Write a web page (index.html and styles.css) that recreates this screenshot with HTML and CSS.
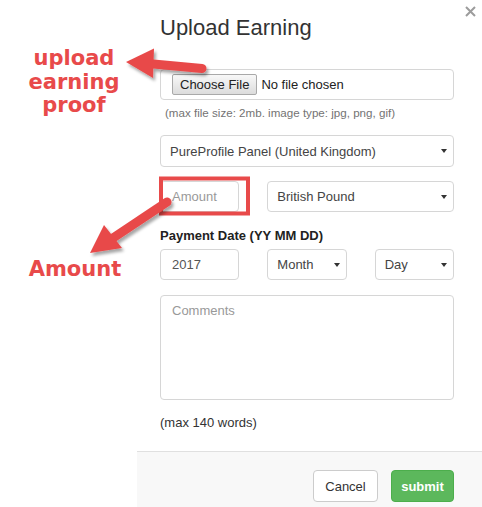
FILE: index.html
```html
<!DOCTYPE html>
<html lang="en">
<head>
    <meta charset="UTF-8">
    <meta name="viewport" content="width=device-width, initial-scale=1.0">
    <title>Upload Earning</title>
    <link rel="stylesheet" href="styles.css">
</head>
<body>

<div class="page">
    <div class="notes">
        <div class="note note-upload">upload<br>earning<br>proof</div>
        <div class="note note-amount">Amount</div>
    </div>

    <div class="modal">
        <div class="modal-header">
            <h2>Upload Earning</h2>
            <button class="close" type="button" aria-label="Close">
                <svg width="11" height="11" viewBox="0 0 11 11">
                    <path d="M1 1 L10 10 M10 1 L1 10" stroke="#9c9c9c" stroke-width="2" fill="none"/>
                </svg>
            </button>
        </div>

        <div class="modal-body">
            <div class="file-box">
                <button type="button" class="file-btn">Choose File</button>
                <span class="file-name">No file chosen</span>
            </div>
            <p class="help">(max file size: 2mb. image type: jpg, png, gif)</p>

            <div class="select select-panel">
                <select>
                    <option>PureProfile Panel (United Kingdom)</option>
                </select>
            </div>

            <div class="row row-amount">
                <input type="text" class="field" placeholder="Amount">
                <div class="select wide">
                    <select>
                        <option>British Pound</option>
                    </select>
                </div>
            </div>

            <label class="date-label">Payment Date (YY MM DD)</label>
            <div class="row row-date">
                <input type="text" class="field" value="2017">
                <div class="select">
                    <select><option>Month</option></select>
                </div>
                <div class="select">
                    <select><option>Day</option></select>
                </div>
            </div>

            <textarea class="comments" placeholder="Comments"></textarea>
            <p class="words">(max 140 words)</p>
        </div>

        <div class="modal-footer">
            <button type="button" class="btn btn-cancel">Cancel</button>
            <button type="button" class="btn btn-submit">submit</button>
        </div>
    </div>

    <!-- annotation overlay -->
    <svg class="marks" width="482" height="507" viewBox="0 0 482 507">
        <defs>
            <filter id="shade" x="-20%" y="-20%" width="140%" height="160%">
                <feDropShadow dx="2" dy="3" stdDeviation="1.8" flood-color="#000" flood-opacity="0.35"/>
            </filter>
        </defs>
        <rect x="161" y="178.5" width="87" height="35" fill="none" stroke="#e84a4a" stroke-width="4"/>
        <g filter="url(#shade)" fill="#e84a4a" stroke="#e84a4a">
            <line x1="148" y1="63.5" x2="202" y2="68.5" stroke-width="9" stroke-linecap="round"/>
            <polygon points="126,62 154,48.5 153,78" stroke="none"/>
            <line x1="167" y1="202" x2="110" y2="240" stroke-width="9" stroke-linecap="round"/>
            <polygon points="90,253 104,225 122,248" stroke="none"/>
        </g>
    </svg>
</div>

</body>
</html>
```

FILE: styles.css
```css
body {
    margin: 0;
    font-family: "Liberation Sans", Arial, sans-serif;
    background-color: #fff;
    color: #333;
}
.page {
    position: relative;
    display: flex;
    width: 482px;
    height: 507px;
    overflow: hidden;
}
.notes {
    width: 137px;
    flex-shrink: 0;
    padding-left: 11px;
    box-sizing: border-box;
}
.note {
    font-family: "DejaVu Sans", Verdana, sans-serif;
    font-weight: bold;
    font-size: 21px;
    line-height: 23.5px;
    color: #e84a4a;
    text-align: center;
}
.note-upload {
    margin-top: 47px;
}
.note-amount {
    margin-top: 140px;
    padding-left: 2px;
}
.modal {
    flex: 1;
    display: flex;
    flex-direction: column;
}
.modal-header {
    display: flex;
    justify-content: space-between;
    align-items: flex-start;
    padding: 0 6px 0 23px;
}
.modal-header h2 {
    margin: 16px 0 0;
    font-size: 22px;
    font-weight: normal;
    line-height: 24px;
    color: #333;
}
.close {
    margin-top: 6px;
    padding: 0;
    border: none;
    background: none;
    line-height: 0;
}
.modal-body {
    padding: 0 28px 0 23px;
}
.file-box {
    margin-top: 29px;
    height: 31px;
    box-sizing: border-box;
    border: 1px solid #d6d6d6;
    border-radius: 4px;
    display: flex;
    align-items: center;
    padding-left: 11px;
    font-size: 13px;
}
.file-btn {
    height: 21px;
    padding: 0 7px;
    font-family: inherit;
    font-size: 13px;
    color: #222;
    border: 1px solid #a9a9a9;
    border-radius: 2px;
    background: linear-gradient(#f8f8f8, #dcdcdc);
}
.file-name {
    margin-left: 4px;
    color: #222;
}
.help {
    margin: 6px 0 0 5px;
    font-size: 11.6px;
    line-height: 14px;
    color: #737373;
}
.select {
    position: relative;
}
.select select {
    width: 100%;
    height: 31px;
    box-sizing: border-box;
    -webkit-appearance: none;
    appearance: none;
    border: 1px solid #d6d6d6;
    border-radius: 4px;
    background-color: #fff;
    padding: 0 9px;
    font-family: inherit;
    font-size: 13px;
    color: #444;
}
.select::after {
    content: "";
    position: absolute;
    right: 7px;
    top: 50%;
    margin-top: -2px;
    border-left: 3px solid transparent;
    border-right: 3px solid transparent;
    border-top: 4px solid #333;
}
.select-panel {
    margin-top: 15px;
}
.select-panel select {
    height: 32px;
}
.row {
    display: grid;
    grid-template-columns: 1fr 1fr 1fr;
    column-gap: 28px;
}
.row .wide {
    grid-column: span 2;
}
.row-amount {
    margin-top: 14px;
}
.field {
    height: 31px;
    box-sizing: border-box;
    border: 1px solid #d6d6d6;
    border-radius: 4px;
    padding: 0 11px;
    font-family: inherit;
    font-size: 13px;
    color: #555;
    min-width: 0;
}
.field::placeholder,
.comments::placeholder {
    color: #999;
}
.date-label {
    display: block;
    margin-top: 16px;
    font-size: 13px;
    font-weight: bold;
    line-height: 16px;
    color: #222;
}
.row-date {
    margin-top: 5px;
}
.comments {
    display: block;
    width: 100%;
    height: 105px;
    margin-top: 15px;
    box-sizing: border-box;
    border: 1px solid #d6d6d6;
    border-radius: 4px;
    padding: 7px 11px;
    font-family: inherit;
    font-size: 13px;
    resize: none;
}
.words {
    margin: 15px 0 0;
    font-size: 13px;
    line-height: 16px;
    color: #333;
}
.modal-footer {
    margin-top: auto;
    height: 56px;
    box-sizing: border-box;
    border-top: 1px solid #e0e0e0;
    background-color: #f8f8f8;
    display: flex;
    justify-content: flex-end;
    align-items: flex-start;
    gap: 13px;
    padding: 18px 28px 0 0;
}
.btn {
    height: 32px;
    border-radius: 4px;
    font-family: inherit;
    font-size: 13px;
    padding: 0;
}
.btn-cancel {
    width: 65px;
    background-color: #fff;
    border: 1px solid #ccc;
    color: #333;
}
.btn-submit {
    width: 63px;
    background-color: #5cb85c;
    border: 1px solid #4cae4c;
    color: #fff;
    font-weight: bold;
}
.marks {
    position: absolute;
    left: 0;
    top: 0;
    pointer-events: none;
}
```
